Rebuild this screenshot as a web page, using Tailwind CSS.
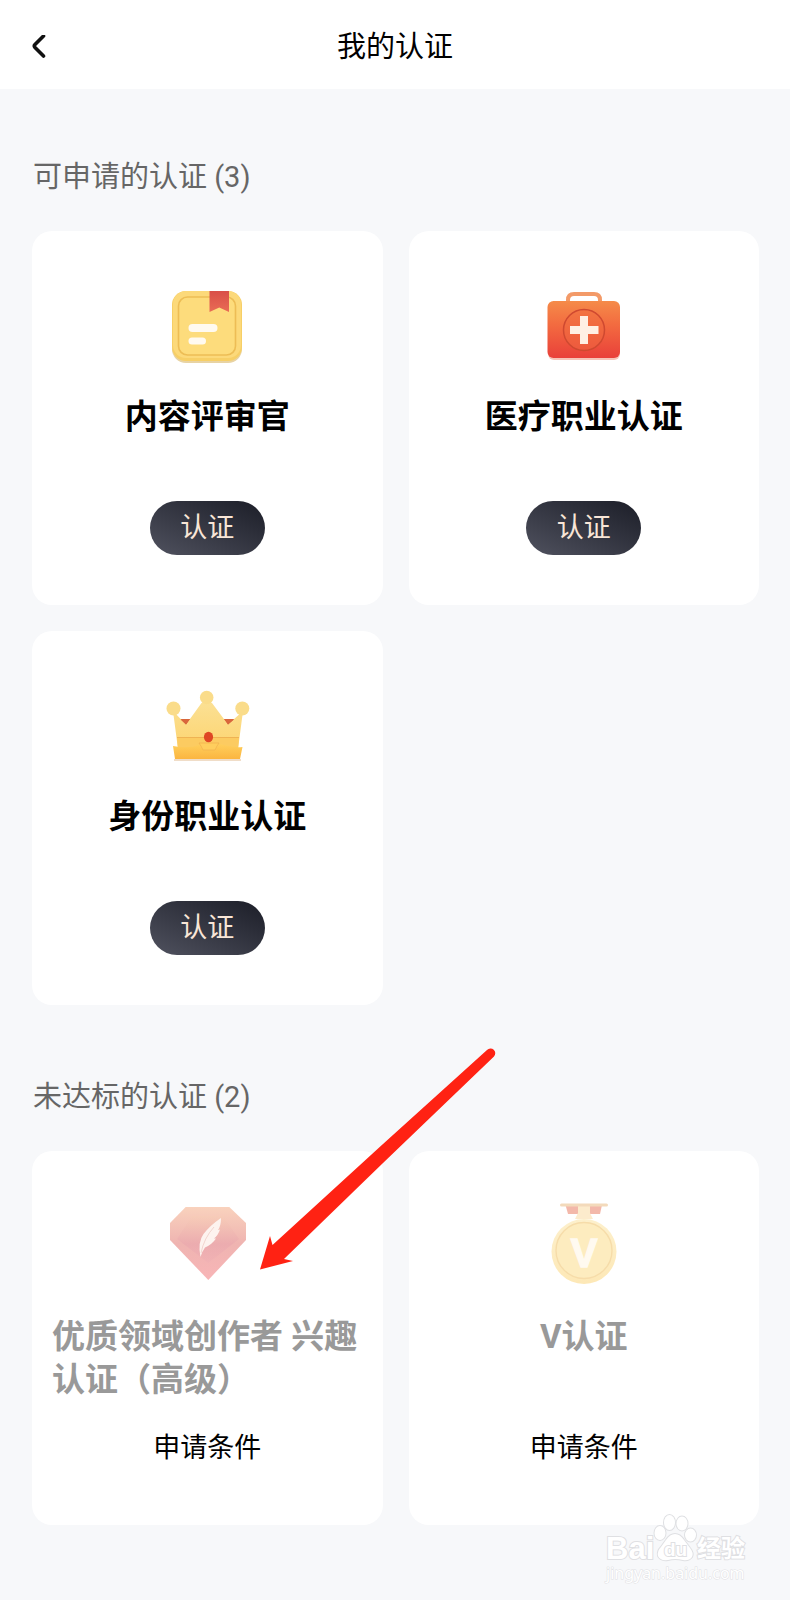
<!DOCTYPE html>
<html lang="zh-CN">
<head>
  <meta charset="UTF-8">
  <meta name="viewport" content="width=device-width, initial-scale=1.0">
  <title>我的认证</title>
  <script src="https://cdn.jsdelivr.net/npm/@tailwindcss/browser@4"></script>
</head>
<body class="relative min-h-screen bg-[#f7f8fa] font-[Roboto,'Noto_Sans_CJK_SC',sans-serif] text-black">
  <header class="relative flex h-[89px] items-center justify-center bg-white pt-1">
    <button aria-label="返回" class="absolute left-[26px] flex size-6 items-center justify-center">
      <svg class="h-6 w-4" viewBox="0 0 16 24" fill="none" stroke="#111" stroke-width="3.6" stroke-linecap="round" stroke-linejoin="round"><path d="M13.500 1 5 9.500Q3.600 11 5 12.500l8.500 8.500"/></svg>
    </button>
    <h1 class="text-[29px] leading-[44px]">我的认证</h1>
  </header>

  <main class="pt-[66px] pr-[31px] pb-[75px] pl-8">
    <section>
      <h2 class="mb-8 pl-px text-[29px] leading-[44px] text-[#666]">可申请的认证 (3)</h2>
      <div class="grid grid-cols-2 gap-[26px]">
        <article class="flex flex-col items-center rounded-[20px] bg-white px-5 py-[50px]">
          <svg class="mb-6 size-[90px]" viewBox="0 0 90 90">
            <defs><linearGradient id="ribbon" x2="0" y2="1"><stop stop-color="#d94f48"/><stop offset="1" stop-color="#e96c55"/></linearGradient></defs>
            <rect x="10" y="12" width="70" height="70" rx="14" fill="#e8d3a3"/>
            <rect x="10" y="10" width="70" height="70" rx="14" fill="#f7cf66"/>
            <rect x="11" y="10" width="68" height="67" rx="13" fill="#fcd97a"/>
            <rect x="16.500" y="16" width="57" height="58" rx="9" fill="#fddc7c" stroke="#edbd55" stroke-width="1.600"/>
            <path d="M47.500 10H67v21l-9.700-4.500-9.800 4.500z" fill="url(#ribbon)"/>
            <rect x="26.500" y="43" width="29" height="8" rx="4" fill="#fffaf0"/>
            <rect x="26.500" y="56.500" width="17.500" height="7" rx="3.500" fill="#fffaf0"/>
          </svg>
          <h3 class="mb-5 min-h-[86px] text-[33px] leading-[43px] font-bold">内容评审官</h3>
          <button class="h-[54px] w-[115px] rounded-full bg-linear-to-tr from-[#50525f] to-[#1c1e28] text-[27px] text-[#f9e6d7]">认证</button>
        </article>

        <article class="flex flex-col items-center rounded-[20px] bg-white px-5 py-[50px]">
          <svg class="mb-6 size-[90px]" viewBox="0 0 90 90">
            <defs><linearGradient id="kit" x2="0" y2="1"><stop stop-color="#f58b49"/><stop offset=".4" stop-color="#f36c40"/><stop offset="1" stop-color="#e9403a"/></linearGradient></defs>
            <path d="M29 22v-3q0-6 6-6h20q6 0 6 6v3" fill="none" stroke="#f39a68" stroke-width="4"/>
            <rect x="9" y="23" width="72" height="56" rx="6" fill="#f6c4b8"/>
            <rect x="8.500" y="20" width="72.500" height="57" rx="6" fill="url(#kit)"/>
            <circle cx="45" cy="49" r="20.500" fill="#f06a40" fill-opacity=".5" stroke="#cf4930" stroke-width="1.500"/>
            <path d="M41 35h8v10h10.500v8H49v10h-8V53H31v-8h10z" fill="#fff0e4"/>
          </svg>
          <h3 class="mb-5 min-h-[86px] text-[33px] leading-[43px] font-bold">医疗职业认证</h3>
          <button class="h-[54px] w-[115px] rounded-full bg-linear-to-tr from-[#50525f] to-[#1c1e28] text-[27px] text-[#f9e6d7]">认证</button>
        </article>

        <article class="flex flex-col items-center rounded-[20px] bg-white px-5 py-[50px]">
          <svg class="mb-6 size-[90px]" viewBox="0 0 90 90">
            <defs>
              <linearGradient id="crown" x2="0" y2="1"><stop stop-color="#fbe093"/><stop offset="1" stop-color="#fdd470"/></linearGradient>
              <linearGradient id="base" x2="0" y2="1"><stop stop-color="#ffcf5c"/><stop offset="1" stop-color="#fbb540"/></linearGradient>
            </defs>
            <path d="M17 38h14l-4 7h-6zM60 38h13l-4 7h-6z" fill="#d9663c"/>
            <path d="M12 78h67v2H12z" fill="#f0ddc8"/>
            <path d="M11 30 24 43.500 39.500 22h10.500l16 21.500L81 30 76 68H16z" fill="url(#crown)"/>
            <path d="M18.500 38.500 24 43.500l4-5.500zM62.500 38l3.500 5.500 6-5z" fill="#d9663c"/>
            <path d="M15 56.500h62L76 68H16z" fill="#fccb61"/>
            <path d="M15 56.500h62" stroke="#efb353" stroke-width="1"/>
            <path d="M11 65q16 3 26-1l4 2h14l3-3q12 4 22.500 3L78 78H13z" fill="url(#base)"/>
            <path d="M37 62h20l-2 3-2 4H41l-2-4z" fill="#ffce5d" stroke="#f2b44e" stroke-width=".8"/>
            <circle cx="11.500" cy="27.500" r="7" fill="#fadc8a"/>
            <circle cx="44.700" cy="16.500" r="6.800" fill="#fadc8a"/>
            <circle cx="80.300" cy="27.500" r="7" fill="#fadc8a"/>
            <ellipse cx="46.500" cy="56" rx="4.600" ry="5.200" fill="#df4724"/>
          </svg>
          <h3 class="mb-5 min-h-[86px] text-[33px] leading-[43px] font-bold">身份职业认证</h3>
          <button class="h-[54px] w-[115px] rounded-full bg-linear-to-tr from-[#50525f] to-[#1c1e28] text-[27px] text-[#f9e6d7]">认证</button>
        </article>
      </div>
    </section>

    <section class="relative mt-[70px]">
      <h2 class="mb-8 pl-px text-[29px] leading-[44px] text-[#666]">未达标的认证 (2)</h2>
      <div class="grid grid-cols-2 gap-[26px]">
        <article class="flex flex-col items-center rounded-[20px] bg-white px-5 py-[50px]">
          <svg class="mb-6 size-[90px]" viewBox="0 0 90 90">
            <defs>
              <linearGradient id="gem" x2="0" y2="1"><stop stop-color="#f9d2bd"/><stop offset=".5" stop-color="#efb4b1"/><stop offset="1" stop-color="#f8b5b7"/></linearGradient>
              <linearGradient id="gemInner" x2="0" y2="1"><stop stop-color="#f7cdb6"/><stop offset=".6" stop-color="#e8a4ad"/><stop offset="1" stop-color="#efb0b4"/></linearGradient>
            </defs>
            <path d="M23.700 6h43.600L84 22v17L46.300 79 8 39V22z" fill="url(#gem)"/>
            <path d="M30 15h31l16 23-30.700 24L15 38z" fill="url(#gemInner)" fill-opacity=".5"/>
            <path d="M38.500 56q-3-15 3-23 7-9 17.500-16 0 8-3 12l2-.5q-2 6-6 9l2 0q-4 6-11 9-3 4-4.500 9.500z" fill="#fdf3ef"/>
            <path d="M39 52q3-15 13-26" fill="none" stroke="#efcdc6" stroke-width=".8"/>
          </svg>
          <h3 class="mb-5 min-h-[86px] text-[33px] leading-[43px] font-bold text-[#999]">优质领域创作者 兴趣认证（高级）</h3>
          <button class="h-[54px] text-[27px]">申请条件</button>
        </article>

        <article class="flex flex-col items-center rounded-[20px] bg-white px-5 py-[50px]">
          <svg class="mb-6 size-[90px]" viewBox="0 0 90 90">
            <defs><linearGradient id="medal" x2="0" y2="1"><stop stop-color="#fdf0cc"/><stop offset="1" stop-color="#fde8b6"/></linearGradient></defs>
            <path d="M26.500 4H63l-2 9H29z" fill="#f3b8aa"/>
            <path d="M39 4h12v8l3 6H36l3-6z" fill="#fcebcc"/>
            <rect x="21" y="2.500" width="48" height="3" rx="1.500" fill="#f3dabb"/>
            <circle cx="45" cy="50.500" r="32.500" fill="url(#medal)"/>
            <circle cx="45" cy="49.500" r="28" fill="#fdecbf" stroke="#f6dca9" stroke-width="1.400"/>
            <text x="45" y="66" text-anchor="middle" font-family="Liberation Sans, sans-serif" font-weight="700" font-size="40" fill="#fffaf0" stroke="#fffaf0" stroke-width="1.500">V</text>
          </svg>
          <h3 class="mb-5 min-h-[86px] text-[33px] leading-[43px] font-bold text-[#999]">V认证</h3>
          <button class="h-[54px] text-[27px]">申请条件</button>
        </article>
      </div>

      <!-- pointer to the advanced creator card -->
      <svg class="pointer-events-none absolute -top-[35px] left-[218px] h-[240px] w-[260px]" viewBox="250 1040 260 240" fill="#ff2213">
        <path d="M260 1269.500 270 1236 272.500 1245 383 1144 487 1050A4.600 4.600 0 0 1 494 1056.500L383 1163 284 1259 293 1261z"/>
      </svg>
    </section>
  </main>

  <svg class="pointer-events-none absolute right-[38px] bottom-[10px] h-[80px] w-[150px]" viewBox="602 1510 150 80" fill="#fff" stroke="#dfe0e3" stroke-width="2" paint-order="stroke">
    <text x="606" y="1559" font-family="Liberation Sans, sans-serif" font-weight="700" font-size="31">Bai</text>
    <ellipse cx="660" cy="1533" rx="5.500" ry="7"/>
    <ellipse cx="669.500" cy="1522.500" rx="5.500" ry="7.500"/>
    <ellipse cx="682" cy="1523.500" rx="5.500" ry="7"/>
    <ellipse cx="690.500" cy="1535" rx="5.500" ry="6.500"/>
    <path d="M675 1534q5 0 9 6l6 8q4 5 2 9-3 4-9 3-8-2-15 0-8 1-10-4-1-5 3-9l5-7q4-6 9-6z"/>
    <text x="664" y="1556" font-family="Liberation Sans, sans-serif" font-weight="700" font-size="19">du</text>
    <text x="697" y="1557" font-family="Noto Sans CJK SC, sans-serif" font-weight="700" font-size="24">经验</text>
    <text x="606" y="1579" font-family="Noto Sans, sans-serif" font-size="16" stroke-width="1">jingyan.baidu.com</text>
  </svg>
</body>
</html>
